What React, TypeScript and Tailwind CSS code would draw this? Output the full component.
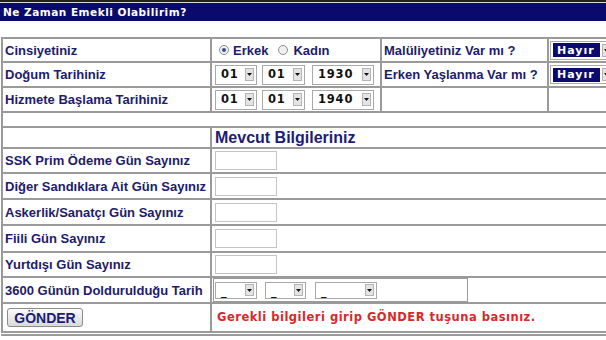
import React from "react";

const LABEL = "font-['Liberation_Sans',Arial,sans-serif] font-bold text-[13px] text-[#1b1b6f] leading-none";

function Arrow({ h = "h-[13px]" }: { h?: string }) {
  return (
    <span className={`flex w-[9px] ${h} mr-[2px] items-center justify-center border border-[#b3b3b3] bg-[#e4e4e4]`}>
      <svg width="5" height="3" viewBox="0 0 5 3">
        <path d="M0 0H5L2.5 3Z" fill="#111" />
      </svg>
    </span>
  );
}

function DateSel({ text, w }: { text: string; w: string }) {
  return (
    <div className={`flex h-[20px] items-center border border-[#a9a9a9] bg-white ${w}`}>
      <span className="flex-1 pl-[5px] font-['DejaVu_Sans',Verdana,sans-serif] text-[11.5px] font-bold leading-none tracking-[0.8px] text-[#111]">
        {text}
      </span>
      <Arrow />
    </div>
  );
}

function BlankSel({ w }: { w: string }) {
  return (
    <div className={`flex h-[17px] items-center border border-[#a9a9a9] bg-white ${w}`}>
      <span className="flex-1 self-end pb-[1px] pl-[5px] font-['DejaVu_Sans',Verdana,sans-serif] text-[11px] font-bold leading-none text-[#111]">
        _
      </span>
      <Arrow h="h-[12px]" />
    </div>
  );
}

function HayirSel() {
  return (
    <div className="ml-[1px] flex h-[19px] w-[70px] items-center border border-[#a9a9a9] bg-white">
      <span className="ml-[2px] flex h-[14px] w-[47px] items-center bg-[#0a0a70] pl-[4px] font-['DejaVu_Sans',Verdana,sans-serif] text-[11px] font-bold leading-none tracking-[1px] text-white">
        Hayır
      </span>
      <span className="ml-[2px]">
        <Arrow />
      </span>
    </div>
  );
}

function Radio({ checked }: { checked?: boolean }) {
  return (
    <span className="flex h-[10px] w-[10px] items-center justify-center rounded-full border border-[#8f8f8f] bg-[#f0f0f0]">
      {checked && <span className="h-[4px] w-[4px] rounded-full bg-[#3d4f86]" />}
    </span>
  );
}

function TextBox() {
  return <div className="ml-[3px] h-[19px] w-[62px] border border-[#c4c4c4] bg-white" />;
}

const cell = "bg-white flex items-center";

export default function App() {
  const lowerRows = [
    "SSK Prim Ödeme Gün Sayınız",
    "Diğer Sandıklara Ait Gün Sayınız",
    "Askerlik/Sanatçı Gün Sayınız",
    "Fiili Gün Sayınız",
    "Yurtdışı Gün Sayınız",
  ];
  return (
    <div className="h-[340px] w-[606px] overflow-hidden bg-white">
      <div className="h-[2px] bg-[#222]" />
      <div className="h-[1px] bg-[#d8d8d8]" />
      <div className="flex h-[18px] items-center bg-[#0a0a6e] pl-[3px]">
        <span className="font-['DejaVu_Sans',Verdana,sans-serif] text-[10.5px] font-bold leading-none tracking-[0.5px] text-white">
          Ne Zaman Emekli Olabilirim?
        </span>
      </div>
      <div className="h-[16px]" />
      <div className="ml-[1px] w-[631px]">
        <div className="grid grid-cols-[207px_168px_165px_80px] grid-rows-[22px_23px_23px_13px_19px_23px_24px_24px_25px_23px_24px_27px] gap-[2px] bg-[#9a9a9a] p-[2px]">
          {/* Row 1 */}
          <div className={`${cell} pl-[2px]`}>
            <span className={LABEL}>Cinsiyetiniz</span>
          </div>
          <div className={`${cell} pl-[7px]`}>
            <Radio checked />
            <span className={`${LABEL} ml-[4px]`}>Erkek</span>
            <span className="ml-[10px]">
              <Radio />
            </span>
            <span className={`${LABEL} ml-[5px]`}>Kadın</span>
          </div>
          <div className={`${cell} pl-[2px]`}>
            <span className={LABEL}>Malüliyetiniz Var mı ?</span>
          </div>
          <div className={cell}>
            <HayirSel />
          </div>

          {/* Row 2 */}
          <div className={`${cell} pl-[2px]`}>
            <span className={LABEL}>Doğum Tarihiniz</span>
          </div>
          <div className={`${cell} pl-[3px]`}>
            <DateSel text="01" w="w-[42px]" />
            <span className="ml-[5px]">
              <DateSel text="01" w="w-[43px]" />
            </span>
            <span className="ml-[7px]">
              <DateSel text="1930" w="w-[62px]" />
            </span>
          </div>
          <div className={`${cell} pl-[2px]`}>
            <span className={LABEL}>Erken Yaşlanma Var mı ?</span>
          </div>
          <div className={cell}>
            <HayirSel />
          </div>

          {/* Row 3 */}
          <div className={`${cell} pl-[2px]`}>
            <span className={LABEL}>Hizmete Başlama Tarihiniz</span>
          </div>
          <div className={`${cell} pl-[3px]`}>
            <DateSel text="01" w="w-[42px]" />
            <span className="ml-[5px]">
              <DateSel text="01" w="w-[43px]" />
            </span>
            <span className="ml-[7px]">
              <DateSel text="1940" w="w-[62px]" />
            </span>
          </div>
          <div className={cell} />
          <div className={cell} />

          {/* Row 4 blank */}
          <div className={`${cell} col-span-4`} />

          {/* Row 5 heading */}
          <div className={cell} />
          <div className={`${cell} col-span-3 pl-[3px]`}>
            <span className="font-['Liberation_Sans',Arial,sans-serif] text-[16px] font-bold leading-none text-[#1c1c78]">
              Mevcut Bilgileriniz
            </span>
          </div>

          {lowerRows.map((r) => (
            <React.Fragment key={r}>
              <div className={`${cell} pl-[2px]`}>
                <span className={LABEL}>{r}</span>
              </div>
              <div className={`${cell} col-span-3`}>
                <TextBox />
              </div>
            </React.Fragment>
          ))}

          {/* 3600 row */}
          <div className={`${cell} pl-[2px]`}>
            <span className={LABEL}>3600 Günün Doldurulduğu Tarih</span>
          </div>
          <div className="col-span-3 flex items-stretch bg-white">
            <div className="ml-[1px] flex w-[255px] items-center border border-[#9a9a9a]">
              <span className="ml-[1px]">
                <BlankSel w="w-[42px]" />
              </span>
              <span className="ml-[8px]">
                <BlankSel w="w-[41px]" />
              </span>
              <span className="ml-[9px]">
                <BlankSel w="w-[62px]" />
              </span>
            </div>
          </div>

          {/* Submit row */}
          <div className={`${cell} pl-[4px]`}>
            <button className="flex h-[19px] w-[76px] items-center justify-center rounded-[3px] border border-[#8c8c8c] bg-gradient-to-b from-[#fbfbfb] to-[#d9d9d9] font-['Liberation_Sans',Arial,sans-serif] text-[14px] font-bold leading-none text-[#1b1b78]">
              GÖNDER
            </button>
          </div>
          <div className={`${cell} col-span-3 pl-[5px]`}>
            <span className="font-['DejaVu_Sans',Verdana,sans-serif] text-[11.5px] font-bold leading-none tracking-[0.5px] text-[#d42a2a]">
              Gerekli bilgileri girip GÖNDER tuşuna basınız.
            </span>
          </div>
        </div>
        <div className="h-[1px] bg-white" />
        <div className="h-[2px] bg-[#9a9a9a]" />
      </div>
    </div>
  );
}
